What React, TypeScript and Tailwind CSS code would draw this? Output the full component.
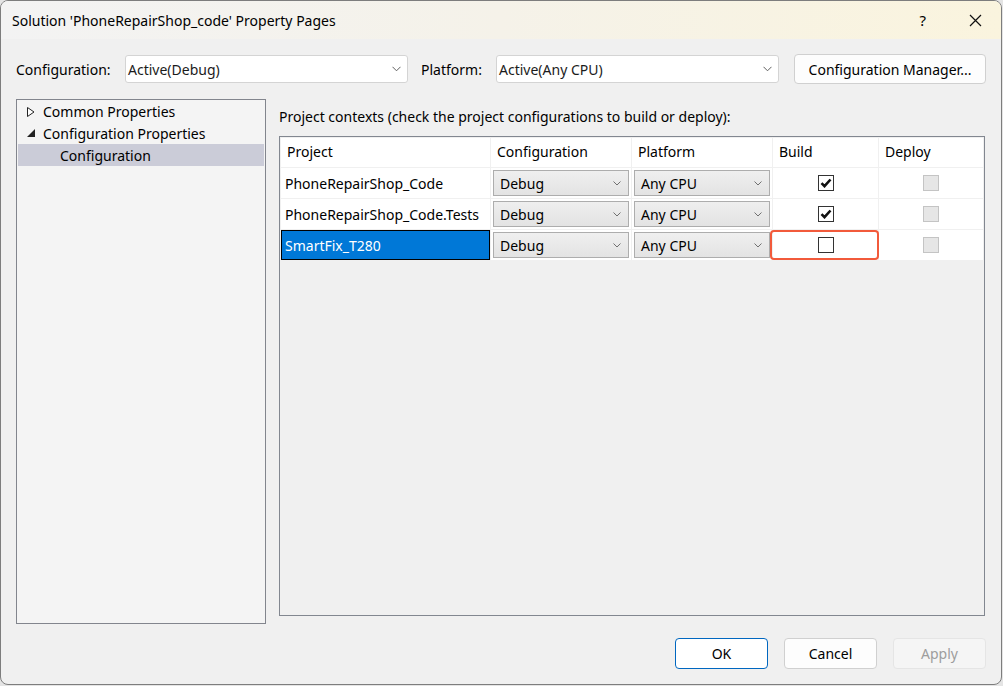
import React from "react";

const font = { fontFamily: '"Noto Sans", "Open Sans", sans-serif' };

function Chevron({ color = "#606060" }: { color?: string }) {
  return (
    <svg width="9" height="6" viewBox="0 0 9 6" className="shrink-0">
      <polyline points="0.5,0.8 4.5,4.8 8.5,0.8" fill="none" stroke={color} strokeWidth="1" />
    </svg>
  );
}

function SmallChevron() {
  return (
    <svg width="8" height="5" viewBox="0 0 8 5" className="shrink-0">
      <polyline points="0.5,0.5 4,4 7.5,0.5" fill="none" stroke="#707070" strokeWidth="1" />
    </svg>
  );
}

function Select({ value, width }: { value: string; width: string }) {
  return (
    <div
      className={`${width} h-[28px] bg-white border border-[#d4d4d4] rounded-[3px] flex items-center justify-between pl-[2px] pr-[6px] text-[14px] text-[#1b1b1b]`}
    >
      <span>{value}</span>
      <Chevron />
    </div>
  );
}

function Combo({ value }: { value: string }) {
  return (
    <div className="m-[2px] h-[26px] bg-gradient-to-b from-[#efefef] to-[#e3e3e3] border border-[#adadad] flex items-center justify-between pl-[6px] pr-[7px] text-[14px] text-black">
      <span>{value}</span>
      <SmallChevron />
    </div>
  );
}

function Check({ checked }: { checked: boolean }) {
  return (
    <div className="w-[16px] h-[16px] border border-[#333333] bg-white flex items-center justify-center">
      {checked && (
        <svg width="12" height="10" viewBox="0 0 12 10">
          <polyline points="1.5,5.2 4.5,8.2 10.5,1.5" fill="none" stroke="#111" strokeWidth="2.6" />
        </svg>
      )}
    </div>
  );
}

function DisabledCheck() {
  return <div className="w-[16px] h-[16px] border border-[#c4c4c4] bg-[#e6e6e6]" />;
}

const rows = [
  { name: "PhoneRepairShop_Code", build: true, selected: false },
  { name: "PhoneRepairShop_Code.Tests", build: true, selected: false },
  { name: "SmartFix_T280", build: false, selected: true },
];

export default function App() {
  return (
    <div className="w-[1003px] h-[686px] bg-[#e4e4e4] overflow-hidden" style={font}>
      <div className="w-[1002px] h-[685px] border border-[#7d7d7d] rounded-[8px] overflow-hidden bg-[#f0f0f0] flex flex-col">
        {/* Title bar */}
        <div className="h-[38px] shrink-0 bg-gradient-to-r from-[#f3f3f3] via-[#f5f2e9] to-[#faf4de] flex items-center pl-[11px] pr-[19px]">
          <span className="text-[14px] text-black flex-1">Solution 'PhoneRepairShop_code' Property Pages</span>
          <span className="text-[15px] text-black mr-[43px]">?</span>
          <svg width="13" height="13" viewBox="0 0 13 13">
            <path d="M1 1 L12 12 M12 1 L1 12" stroke="#111" strokeWidth="1.2" />
          </svg>
        </div>

        {/* Configuration row */}
        <div className="h-[30px] mt-[15px] shrink-0 flex items-center pl-[15px] pr-[15px]">
          <span className="text-[14px] text-black w-[109px]">Configuration:</span>
          <Select value="Active(Debug)" width="w-[283px]" />
          <span className="text-[14px] text-black ml-[13px] w-[75px]">Platform:</span>
          <Select value="Active(Any CPU)" width="w-[283px]" />
          <div className="ml-[15px] w-[192px] h-[30px] bg-[#fdfdfd] border border-[#d0d0d0] rounded-[4px] flex items-center justify-center text-[14px] text-black">
            Configuration Manager...
          </div>
        </div>

        {/* Main */}
        <div className="flex mt-[15px] pl-[15px] pr-[16px] h-[525px] shrink-0">
          {/* Tree */}
          <div className="w-[250px] h-[525px] border border-[#82858d] bg-[#f4f4f4] pt-[1px] pl-[1px] pr-[1px]">
            <div className="h-[21px] flex items-center text-[14px] text-black">
              <svg width="8" height="10" viewBox="0 0 8 10" className="ml-[9px] mr-[8px]">
                <polygon points="0.5,0.5 7,5 0.5,9.5" fill="white" stroke="#222" strokeWidth="1" />
              </svg>
              Common Properties
            </div>
            <div className="h-[22px] flex items-center text-[14px] text-black">
              <svg width="8" height="8" viewBox="0 0 8 8" className="ml-[9px] mr-[8px]">
                <polygon points="8,0 8,8 0,8" fill="#222" />
              </svg>
              Configuration Properties
            </div>
            <div className="h-[22px] flex items-center text-[14px] text-black bg-[#cbccd8] pl-[42px]">Configuration</div>
          </div>

          {/* Right */}
          <div className="ml-[13px] flex-1 flex flex-col">
            <div className="h-[37px] flex items-center text-[14px] text-black pb-[2px]">
              Project contexts (check the project configurations to build or deploy):
            </div>
            <div className="h-[480px] border border-[#828790] bg-[#f0f0f0] p-px">
              <div className="grid grid-cols-[209px_140px_140px_105px_1fr] gap-px">
                {["Project", "Configuration", "Platform", "Build", "Deploy"].map((h) => (
                  <div key={h} className="h-[29px] bg-white flex items-center pl-[6px] pb-[2px] text-[14px] text-black">
                    {h}
                  </div>
                ))}
                {rows.map((r) => (
                  <React.Fragment key={r.name}>
                    <div
                      className={
                        r.selected
                          ? "h-[30px] bg-[#0078d7] border border-black flex items-center pl-[3px] text-[14px] text-white"
                          : "h-[30px] bg-white flex items-center pl-[4px] text-[14px] text-black"
                      }
                    >
                      {r.name}
                    </div>
                    <div className="h-[30px] bg-white">
                      <Combo value="Debug" />
                    </div>
                    <div className="h-[30px] bg-white">
                      <Combo value="Any CPU" />
                    </div>
                    <div className="h-[30px] bg-white flex items-center justify-center relative">
                      <Check checked={r.build} />
                      {r.selected && (
                        <div className="absolute -left-[3px] -right-px top-0 bottom-0 border-2 border-[#f25a3b] rounded-[4px]" />
                      )}
                    </div>
                    <div className="h-[30px] bg-white flex items-center justify-center">
                      <DisabledCheck />
                    </div>
                  </React.Fragment>
                ))}
              </div>
            </div>
          </div>
        </div>

        {/* Buttons */}
        <div className="flex justify-end gap-[16px] mt-[14px] pr-[15px]">
          <div className="w-[93px] h-[31px] bg-white border border-[#0067c0] rounded-[4px] flex items-center justify-center text-[14px] text-black">
            OK
          </div>
          <div className="w-[93px] h-[31px] bg-[#fdfdfd] border border-[#d0d0d0] rounded-[4px] flex items-center justify-center text-[14px] text-black">
            Cancel
          </div>
          <div className="w-[93px] h-[31px] bg-[#f5f5f5] border border-[#e5e5e5] rounded-[4px] flex items-center justify-center text-[14px] text-[#9d9d9d]">
            Apply
          </div>
        </div>
      </div>
    </div>
  );
}
